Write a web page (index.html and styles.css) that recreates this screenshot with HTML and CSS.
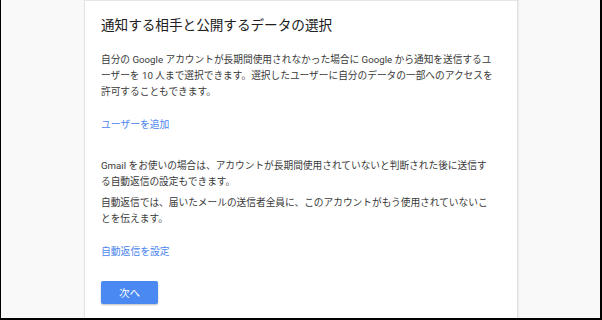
FILE: index.html
```html
<!DOCTYPE html>
<html lang="ja">
<head>
<meta charset="utf-8">
<link rel="stylesheet" href="styles.css">
</head>
<body>
<div class="frame">
  <div class="card">
    <h1 class="title">通知する相手と公開するデータの選択</h1>
    <p class="text first">自分の Google アカウントが長期間使用されなかった場合に Google から通知を送信するユ<br>ーザーを 10 人まで選択できます。選択したユーザーに自分のデータの一部へのアクセスを<br>許可することもできます。</p>
    <a class="link link-add" href="#">ユーザーを追加</a>
    <p class="text gmail">Gmail をお使いの場合は、アカウントが長期間使用されていないと判断された後に送信す<br>る自動返信の設定もできます。</p>
    <p class="text reply">自動返信では、届いたメールの送信者全員に、このアカウントがもう使用されていないこ<br>とを伝えます。</p>
    <a class="link link-reply" href="#">自動返信を設定</a>
    <button class="next" type="button">次へ</button>
  </div>
</div>
</body>
</html>
```
FILE: styles.css
```css
html, body {
  margin: 0;
  padding: 0;
}
body {
  font-family: "Roboto", "Noto Sans CJK JP", sans-serif;
}
.frame {
  box-sizing: border-box;
  width: 602px;
  height: 320px;
  background: #f9f9f9;
  border-left: 1px solid #000;
  border-right: 2px solid #000;
  border-bottom: 2px solid #000;
  overflow: hidden;
  display: flex;
}
.card {
  box-sizing: border-box;
  margin-left: 84px;
  width: 432px;
  background: #fff;
  border-top: 1px solid #e6e6e6;
  box-shadow: -1px 0 0 #e2e2e2, 1px 0 0 #e2e2e2, 2px 0 1px #ececec;
  padding: 14px 16px 0 16px;
  display: flex;
  flex-direction: column;
  align-items: flex-start;
}
.title {
  margin: 0;
  font-size: 13.6px;
  line-height: 20px;
  font-weight: 400;
  color: #202020;
}
.text {
  margin: 0;
  font-size: 9.7px;
  line-height: 16px;
  color: #3a3a3a;
  white-space: nowrap;
}
.first { margin-top: 17px; }
.link {
  font-size: 9.8px;
  line-height: 16px;
  color: #4a84ee;
  text-decoration: none;
}
.link-add { margin-top: 17px; }
.gmail { margin-top: 25px; }
.reply { margin-top: 5px; }
.link-reply { margin-top: 17px; }
.next {
  margin-top: 21px;
  width: 57px;
  height: 23px;
  border: none;
  border-radius: 2px;
  background: #4a88f2;
  color: #fff;
  font-family: inherit;
  font-size: 10.5px;
  padding: 0;
  box-shadow: 0 1px 2px rgba(0,0,0,0.25);
}
```
